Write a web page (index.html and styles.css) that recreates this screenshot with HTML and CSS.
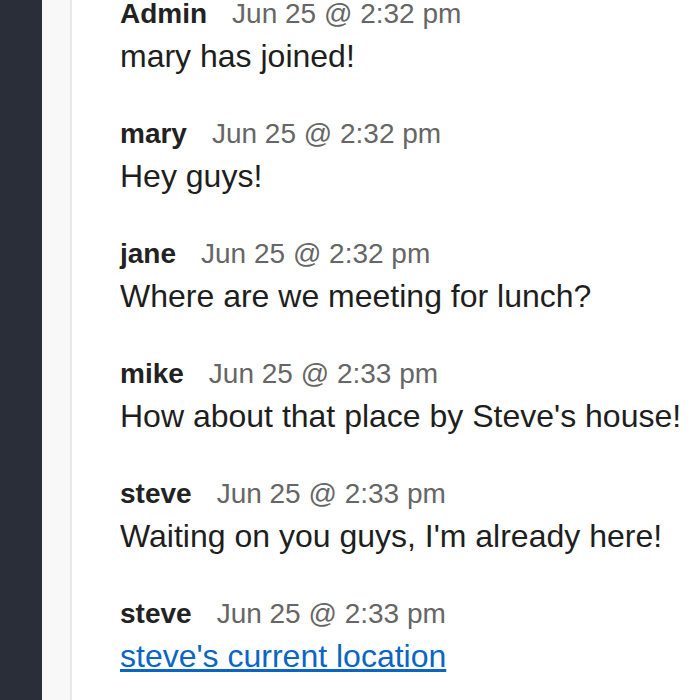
FILE: index.html
```html
<!DOCTYPE html>
<html>
<head>
<meta charset="utf-8">
<link rel="stylesheet" href="styles.css">
</head>
<body>
<div class="app">
  <aside class="sidebar"></aside>
  <div class="rail"></div>
  <main class="chat">
    <div class="msg">
      <div class="meta"><span class="name">Admin</span><span class="time">Jun 25 @ 2:32 pm</span></div>
      <div class="text">mary has joined!</div>
    </div>
    <div class="msg">
      <div class="meta"><span class="name">mary</span><span class="time">Jun 25 @ 2:32 pm</span></div>
      <div class="text">Hey guys!</div>
    </div>
    <div class="msg">
      <div class="meta"><span class="name">jane</span><span class="time">Jun 25 @ 2:32 pm</span></div>
      <div class="text">Where are we meeting for lunch?</div>
    </div>
    <div class="msg">
      <div class="meta"><span class="name">mike</span><span class="time">Jun 25 @ 2:33 pm</span></div>
      <div class="text">How about that place by Steve's house!</div>
    </div>
    <div class="msg">
      <div class="meta"><span class="name">steve</span><span class="time">Jun 25 @ 2:33 pm</span></div>
      <div class="text">Waiting on you guys, I'm already here!</div>
    </div>
    <div class="msg">
      <div class="meta"><span class="name">steve</span><span class="time">Jun 25 @ 2:33 pm</span></div>
      <div class="text"><a class="link" href="#">steve's current location</a></div>
    </div>
  </main>
</div>
</body>
</html>
```
FILE: styles.css
```css
html, body {
  margin: 0;
  padding: 0;
  background: #ffffff;
  font-family: "Liberation Sans", Arial, sans-serif;
}
.app {
  display: flex;
  height: 700px;
  overflow: hidden;
}
.sidebar {
  width: 42px;
  flex: none;
  background: #2a2e39;
}
.rail {
  width: 28px;
  flex: none;
  background: #f8f8f8;
  border-right: 2px solid #e8e8e8;
}
.chat {
  flex: 1;
  padding-left: 48px;
  margin-top: -4px;
  white-space: nowrap;
}
.msg {
  margin-bottom: 36px;
}
.meta {
  font-size: 28px;
  line-height: 36px;
  display: flex;
  gap: 25px;
}
.name {
  font-weight: bold;
  color: #222222;
}
.time {
  color: #666666;
}
.text {
  font-size: 32px;
  line-height: 48px;
  color: #1e1e1e;
}
.link {
  color: #0a66c2;
  text-decoration: underline;
}
```
